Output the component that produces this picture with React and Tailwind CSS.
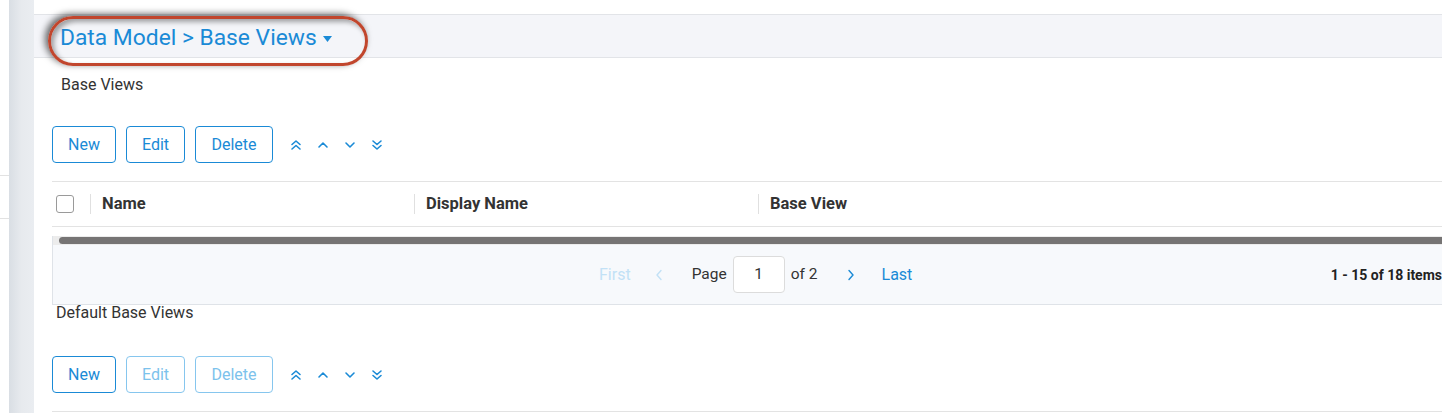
const blue = "text-[#1a8ad6]";

function Chevron({ up, double }) {
  return (
    <svg width="12" height="12" viewBox="0 0 12 12" fill="none" stroke="#1a8ad6" strokeWidth="1.6" strokeLinecap="round" strokeLinejoin="round">
      {up ? (
        <>
          <path d={double ? "M2 5.5 L6 2 L10 5.5" : "M2 8 L6 4 L10 8"} />
          {double && <path d="M2 10 L6 6.5 L10 10" />}
        </>
      ) : (
        <>
          <path d={double ? "M2 2 L6 5.5 L10 2" : "M2 4 L6 8 L10 4"} />
          {double && <path d="M2 6.5 L6 10 L10 6.5" />}
        </>
      )}
    </svg>
  );
}

function Angle({ left, color }) {
  return (
    <svg width="8" height="12" viewBox="0 0 8 12" fill="none" stroke={color} strokeWidth="1.4" strokeLinecap="round" strokeLinejoin="round">
      <path d={left ? "M6 1.5 L2 6 L6 10.5" : "M2 1.5 L6 6 L2 10.5"} />
    </svg>
  );
}

function Toolbar({ disabled }) {
  const on = "border-[#1a8ad6] text-[#1a8ad6]";
  const off = "border-[#86c6ee] text-[#7cc2ec]";
  return (
    <div className="flex items-center">
      <button type="button" className={`h-[37px] w-[64px] rounded border ${on} text-base`}>
        New
      </button>
      <button type="button" className={`ml-[10px] h-[37px] w-[59px] rounded border ${disabled ? off : on} text-base`}>
        Edit
      </button>
      <button type="button" className={`ml-[10px] h-[37px] w-[78px] rounded border ${disabled ? off : on} text-base`}>
        Delete
      </button>
      <div className="ml-[17px] flex items-center gap-[15px]">
        <Chevron up double />
        <Chevron up />
        <Chevron />
        <Chevron double />
      </div>
    </div>
  );
}

export default function App() {
  return (
    <div className="flex h-[413px] w-[1442px] overflow-hidden bg-white text-[#333] font-['Roboto','Liberation_Sans',sans-serif]">
      <div className="w-[9px] flex-none">
        <div className="mt-[175px] h-px bg-[#e2e2e2]" />
        <div className="mt-[42px] h-px bg-[#e2e2e2]" />
      </div>
      <div className="w-[25px] flex-none bg-gradient-to-r from-[#d9dee4] via-[#e7eaee] to-[#eaedf1]" />

      <main className="relative w-[1440px] flex-none">
        <header className="mt-[14px] flex h-[44px] items-center border-y border-[#e2e4e8] bg-[#f4f5f9] pl-[26px] pt-[4px]">
          <span className={`text-[22.8px] leading-none ${blue}`}>Data Model &gt; Base Views</span>
          <svg className="ml-[6px] mt-[2px]" width="9" height="6" viewBox="0 0 9 6">
            <path d="M0 0 H9 L4.5 6 Z" fill="#1a8ad6" />
          </svg>
        </header>
        <div className="pointer-events-none absolute left-[14px] top-[16px] h-[50px] w-[320px] rounded-full border-[3px] border-[#c1462d] shadow-[-3px_-2px_7px_rgba(0,0,0,0.6),inset_3px_3px_5px_rgba(0,0,0,0.35)]" />

        <div className="px-[18px]">
          <p className="mt-[17px] pl-[9px] text-base leading-5">Base Views</p>

          <div className="mt-[31px]">
            <Toolbar />
          </div>

          <div className="mt-[18px] flex h-[46px] items-center border-y border-[#e3e3e3] text-[16.5px] font-bold">
            <span className="ml-[4px] h-[18px] w-[18px] rounded-[3px] border border-[#9a9a9a]" />
            <span className="ml-[16px] h-[20px] w-px bg-[#e0e0e0]" />
            <span className="ml-[11px] w-[312px]">Name</span>
            <span className="h-[20px] w-px bg-[#e0e0e0]" />
            <span className="ml-[11px] w-[332px]">Display Name</span>
            <span className="h-[20px] w-px bg-[#e0e0e0]" />
            <span className="ml-[11px]">Base View</span>
          </div>

          <div className="mt-[9px] border-l border-b border-[#dfe3e8]">
            <div className="h-[9px] bg-[#ececec] pl-[6px] pt-px">
              <div className="h-[7px] rounded-full bg-[#767474]" />
            </div>
            <div className="flex h-[59px] items-center bg-[#f7f9fc] pr-[14px]">
              <span className="ml-[546px] text-base text-[#c2e1f6]">First</span>
              <span className="ml-[24px]">
                <Angle left color="#c2e1f6" />
              </span>
              <span className="ml-[29px] text-[15.5px]">Page</span>
              <span className="ml-[6px] flex h-[37px] w-[52px] items-center justify-center rounded border border-[#dcdcdc] bg-white text-[15.5px]">
                1
              </span>
              <span className="ml-[6px] text-[15.5px]">of 2</span>
              <span className="ml-[29px]">
                <Angle color="#1a8ad6" />
              </span>
              <span className={`ml-[27px] text-base ${blue}`}>Last</span>
              <span className="ml-auto text-sm font-bold text-[#222]">1 - 15 of 18 items</span>
            </div>
          </div>

          <p className="pl-[4px] text-base leading-4">Default Base Views</p>

          <div className="mt-[35px]">
            <Toolbar disabled />
          </div>

          <div className="mt-[18px] border-t border-[#e3e3e3]" />
        </div>
      </main>
    </div>
  );
}
